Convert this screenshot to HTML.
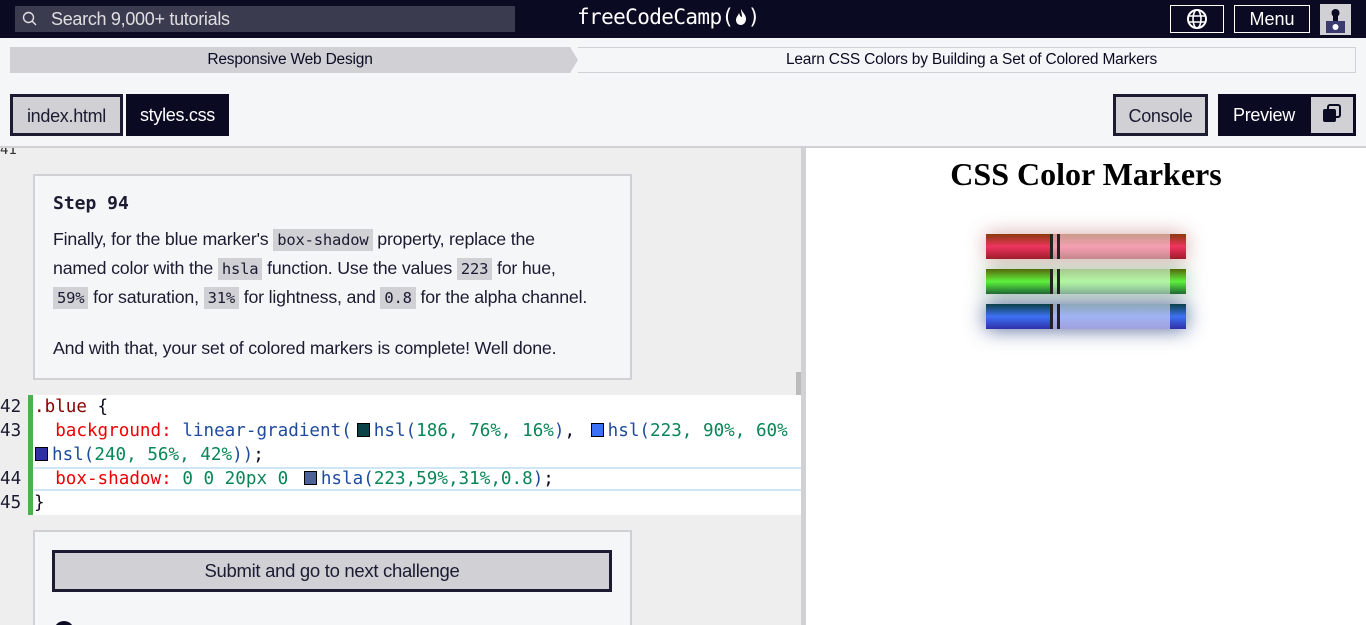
<!DOCTYPE html>
<html style="width:1366px;height:625px;overflow:hidden"><head><meta charset="utf-8"><style>
*{box-sizing:border-box;margin:0;padding:0}
body{width:1366px;height:625px;overflow:hidden;background:#f5f6f7;font-family:"Liberation Sans",sans-serif;position:relative}
.abs{position:absolute}
.hdr{left:0;top:0;width:1366px;height:38px;background:#0a0a23}
.search{left:15px;top:6px;width:500px;height:26px;background:#3b3b4f;color:#dfdfe2;font-size:18px;line-height:26px;padding-left:36px;letter-spacing:-0.3px}
.logo{left:577px;top:5px;color:#fff;font-family:"DejaVu Sans Mono","Liberation Mono",monospace;font-size:21px;letter-spacing:-0.6px}
.hbtn{border:1px solid #fff;color:#fff;height:28px;top:5px;font-size:18px;line-height:26px;text-align:center}
.crumb{top:47px;height:26px;font-size:15.5px;line-height:26px;text-align:center;color:#0a0a23;letter-spacing:-0.2px}
.tab{top:94px;height:42px;font-size:18px;line-height:38px;text-align:center;letter-spacing:-0.3px}
.code{font-family:"DejaVu Sans Mono",monospace;font-size:17.6px;white-space:pre;line-height:24px}
.ic{background:#d0d0d5;font-family:"DejaVu Sans Mono",monospace;font-size:15.5px;padding:2px 4px;color:#1b1b32}
.sw{display:inline-block;width:13px;height:14px;border:1px solid #000;vertical-align:-1px;margin:0 4px 0 5px}
.mk{left:986px;width:200px;height:25px}
</style></head><body>
<div class="abs hdr"></div>
<div class="abs search">Search 9,000+ tutorials</div>
<svg class="abs" style="left:22px;top:11px" width="16" height="16" viewBox="0 0 16 16"><circle cx="6.5" cy="6.5" r="5" fill="none" stroke="#dfdfe2" stroke-width="1.4"/><line x1="10" y1="10" x2="14" y2="14" stroke="#dfdfe2" stroke-width="1.4"/></svg>
<div class="abs logo">freeCodeCamp(<svg width="14" height="18" viewBox="0 0 14 18" style="vertical-align:-2px"><path d="M7 1C9 5 12 7 12 11C12 15 9 17 7 17C4 17 2 15 2 12C2 9 4 8 5 5C6 8 7 9 8 9C8 6 7 4 7 1Z" fill="#fff"/></svg>)</div>
<div class="abs hbtn" style="left:1170px;width:54px"><svg width="22" height="22" viewBox="0 0 22 22" style="margin-top:2px"><circle cx="11" cy="11" r="9" fill="none" stroke="#fff" stroke-width="2"/><ellipse cx="11" cy="11" rx="4" ry="9" fill="none" stroke="#fff" stroke-width="1.6"/><line x1="2" y1="8" x2="20" y2="8" stroke="#fff" stroke-width="1.6"/><line x1="2" y1="14" x2="20" y2="14" stroke="#fff" stroke-width="1.6"/></svg></div>
<div class="abs hbtn" style="left:1234px;width:76px">Menu</div>
<div class="abs" style="left:1320px;top:4px;width:31px;height:31px;background:#d0d0d5"><svg width="31" height="31"><circle cx="15.5" cy="9" r="4" fill="#0a0a23"/><rect x="13" y="12" width="5" height="6" fill="#0a0a23"/><rect x="6" y="17" width="19" height="12" fill="#3b3b6f"/><circle cx="15.5" cy="23" r="3" fill="#fff"/></svg></div>

<div class="abs crumb" style="left:10px;width:560px;background:#d0d0d5">Responsive Web Design</div>
<div class="abs" style="left:570px;top:47px;width:0;height:0;border-top:13px solid transparent;border-bottom:13px solid transparent;border-left:8px solid #d0d0d5"></div>
<div class="abs crumb" style="left:578px;width:778px;border:1px solid #d0d0d5;border-left:none;line-height:24px;padding-left:10px">Learn CSS Colors by Building a Set of Colored Markers</div>

<div class="abs tab" style="left:10px;width:113px;background:#d0d0d5;border:3px solid #1b1b32;color:#1b1b32">index.html</div>
<div class="abs tab" style="left:126px;width:103px;background:#0a0a23;color:#fff;line-height:42px">styles.css</div>
<div class="abs tab" style="left:1113px;width:95px;background:#d0d0d5;border:3px solid #1b1b32;color:#1b1b32">Console</div>
<div class="abs tab" style="left:1218px;width:138px;background:#0a0a23;color:#fff;line-height:42px;text-align:left;padding-left:15px">Preview</div>
<div class="abs" style="left:1311px;top:97px;width:42px;height:36px;background:#d0d0d5"><svg width="42" height="36"><rect x="17" y="8" width="12" height="12" rx="2" fill="none" stroke="#0a0a23" stroke-width="2"/><rect x="12" y="12" width="13" height="13" rx="2" fill="#0a0a23"/></svg></div>
<div class="abs" style="left:0;top:146px;width:1366px;height:2px;background:#d0d0d5"></div>

<div class="abs" style="left:0;top:148px;width:801px;height:477px;background:#eeeeef;overflow:hidden">
<div class="abs code" style="left:0;top:-10px;font-size:14px;color:#333">41</div>
<div class="abs" style="left:33px;top:26px;width:599px;height:206px;background:#f5f6f7;border:2px solid #d0d0d5;padding:17px 18px;color:#1b1b32;white-space:nowrap">
<div style="font-family:'DejaVu Sans Mono',monospace;font-weight:bold;font-size:18px;margin-bottom:11px">Step 94</div>
<div style="font-size:17.8px;line-height:28px;letter-spacing:-0.2px">Finally, for the blue marker's <span class="ic">box-shadow</span> property, replace the<br>named color with the <span class="ic">hsla</span> function. Use the values <span class="ic">223</span> for hue,<br><span class="ic">59%</span> for saturation, <span class="ic">31%</span> for lightness, and <span class="ic">0.8</span> for the alpha channel.</div>
<div style="font-size:17.8px;line-height:28px;margin-top:22px;letter-spacing:-0.2px">And with that, your set of colored markers is complete! Well done.</div>
</div>
<div class="abs" style="left:33px;top:382px;width:599px;height:110px;background:#f5f6f7;border:2px solid #d0d0d5"></div>
<div class="abs" style="left:52px;top:402px;width:560px;height:42px;background:#d0d0d5;border:3px solid #1b1b32;text-align:center;line-height:36px;font-size:18.5px;color:#1b1b32;letter-spacing:-0.3px">Submit and go to next challenge</div>
<div class="abs" style="left:54px;top:473px;width:20px;height:20px;border-radius:50%;background:#0a0a23"></div>
</div>
<div class="abs" style="left:796px;top:372px;width:5px;height:106px;background:#bbb"></div>
<div class="abs" style="left:801px;top:148px;width:5px;height:477px;background:#d0d0d5"></div>
<div class="abs" style="left:806px;top:148px;width:560px;height:477px;background:#fff"></div>

<div class="abs" style="left:0;top:395px;width:801px;height:120px;background:#fff"></div>
<div class="abs" style="left:0;top:395px;width:28px;height:120px;background:#eeeeef"></div>
<div class="abs" style="left:28px;top:395px;width:5px;height:120px;background:#4caf50"></div>
<div class="abs" style="left:34px;top:467px;width:767px;height:24px;border-top:2px solid #cfe6f5;border-bottom:2px solid #cfe6f5"></div>
<div class="abs code" style="left:0;top:395px;color:#1b1b32">42
43

44
45</div>
<div class="abs code" style="left:34px;top:395px;width:767px;overflow:hidden;color:#0a0a23"><span style="color:#800">.blue</span> {
  <span style="color:#e00">background:</span> <span style="color:#1f4b9e">linear-gradient(</span><span class="sw" style="background:hsl(186,76%,16%)"></span><span style="color:#1f4b9e">hsl(</span><span style="color:#098658">186, 76%, 16%</span><span style="color:#1f4b9e">)</span>, <span class="sw" style="background:hsl(223,90%,60%)"></span><span style="color:#1f4b9e">hsl(</span><span style="color:#098658">223, 90%, 60%</span>
<span class="sw" style="background:hsl(240,56%,42%);margin-left:1px"></span><span style="color:#1f4b9e">hsl(</span><span style="color:#098658">240, 56%, 42%</span><span style="color:#1f4b9e">))</span>;
  <span style="color:#e00">box-shadow:</span> <span style="color:#098658">0 0 20px 0</span> <span class="sw" style="background:hsla(223,59%,31%,0.8)"></span><span style="color:#1f4b9e">hsla(</span><span style="color:#098658">223,59%,31%,0.8</span><span style="color:#1f4b9e">)</span>;
}</div>

<div class="abs" style="left:806px;top:156px;width:560px;text-align:center;font-family:'Liberation Serif',serif;font-weight:bold;font-size:32px">CSS Color Markers</div>
<div class="abs mk" style="top:234px;box-shadow:0 0 20px 0 rgba(139,0,0,.35);background:linear-gradient(#8b3a0c,#ee3560,#a51b2c)"></div>
<div class="abs" style="left:1050px;top:234px;width:120px;height:25px;background:linear-gradient(#c89a8a,#f59fb2,#d08a95)"></div>
<div class="abs mk" style="top:269px;box-shadow:0 0 20px 0 rgba(0,100,0,.35);background:linear-gradient(#55680a,#5ef23c,#1f6f2e)"></div>
<div class="abs" style="left:1050px;top:269px;width:120px;height:25px;background:linear-gradient(#a8c890,#b4f7a4,#90c09a)"></div>
<div class="abs mk" style="top:304px;box-shadow:0 0 20px 0 hsla(223,59%,31%,0.8);background:linear-gradient(hsl(186,76%,16%),hsl(223,90%,60%),hsl(240,56%,42%))"></div>
<div class="abs" style="left:1050px;top:304px;width:120px;height:25px;background:linear-gradient(#8ca8b8,#a0b4f5,#a0a0dc)"></div>
<div class="abs" style="left:1050px;top:234px;width:3px;height:95px;background:repeating-linear-gradient(#222 0 25px,transparent 25px 35px)"></div>
<div class="abs" style="left:1057px;top:234px;width:3px;height:95px;background:repeating-linear-gradient(#222 0 25px,transparent 25px 35px)"></div>
</body></html>
